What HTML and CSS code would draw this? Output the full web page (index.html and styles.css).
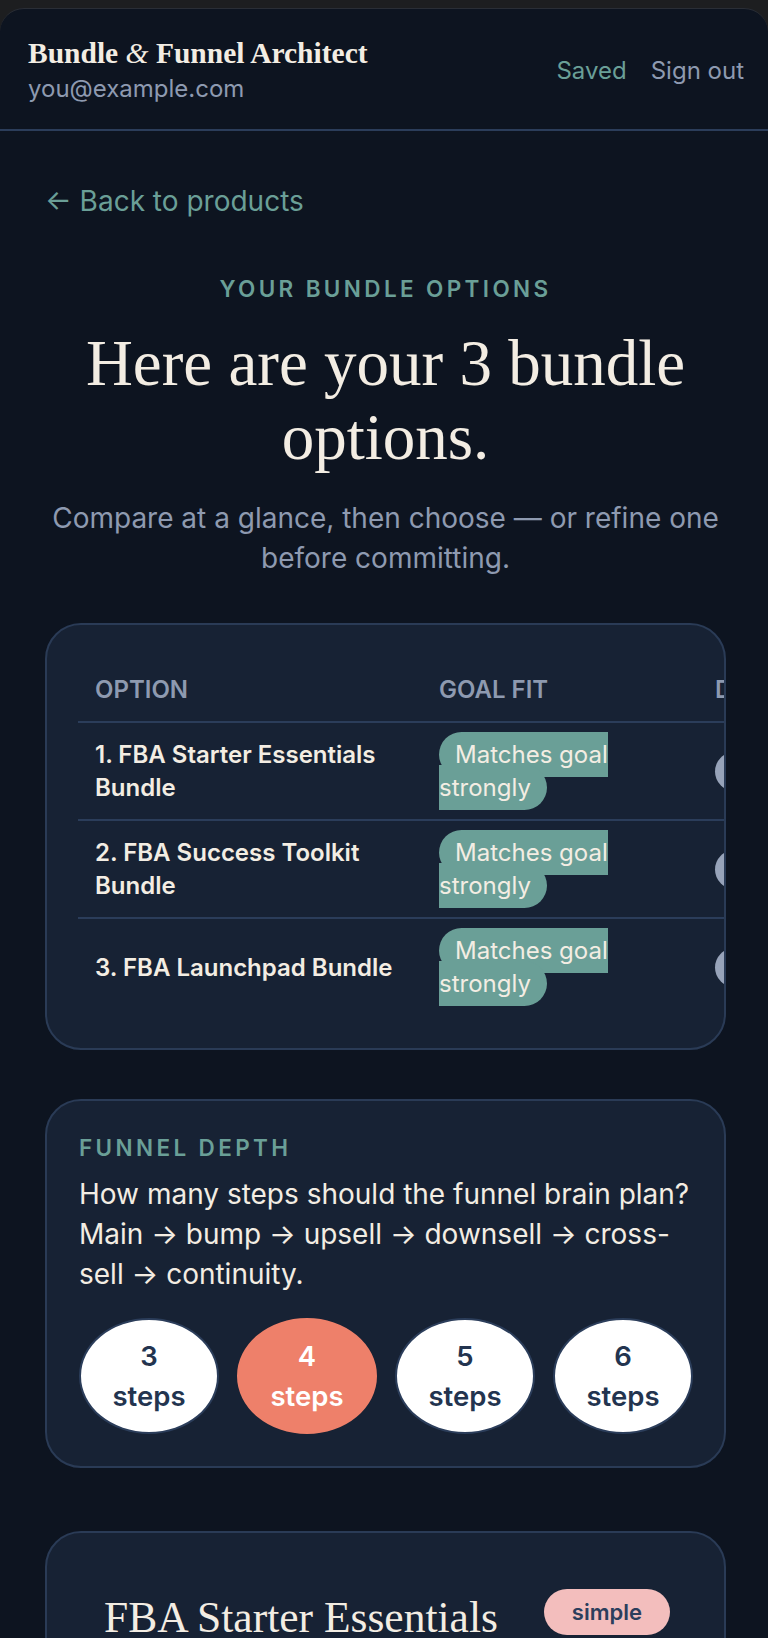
FILE: index.html
```html
<!DOCTYPE html>
<html lang="en">
<head>
    <meta charset="UTF-8">
    <meta name="viewport" content="width=device-width, initial-scale=1.0">
    <title>Bundle &amp; Funnel Architect</title>
    <link rel="stylesheet" href="styles.css">
</head>
<body>
    <div class="app">
        <!-- Top bar -->
        <header class="topbar">
            <div class="brand">
                <div class="brand-name">Bundle <span class="amp">&amp;</span> Funnel Architect</div>
                <div class="brand-email">you@example.com</div>
            </div>
            <nav class="topbar-actions">
                <span class="saved">Saved</span>
                <a href="#" class="signout">Sign out</a>
            </nav>
        </header>

        <main class="page">
            <a href="#" class="back-link">&larr; Back to products</a>

            <section class="intro">
                <p class="eyebrow">Your bundle options</p>
                <h1>Here are your 3 bundle options.</h1>
                <p class="lead">Compare at a glance, then choose — or refine one before committing.</p>
            </section>

            <!-- Comparison table -->
            <div class="card compare-card">
                <table class="compare">
                    <thead>
                        <tr>
                            <th class="col-option">Option</th>
                            <th class="col-fit">Goal fit</th>
                            <th class="col-difficulty">Difficulty</th>
                        </tr>
                    </thead>
                    <tbody>
                        <tr>
                            <td class="option-name">1. FBA Starter Essentials Bundle</td>
                            <td><span class="fit">Matches goal strongly</span></td>
                            <td><span class="level">simple</span></td>
                        </tr>
                        <tr>
                            <td class="option-name">2. FBA Success Toolkit Bundle</td>
                            <td><span class="fit">Matches goal strongly</span></td>
                            <td><span class="level">medium</span></td>
                        </tr>
                        <tr>
                            <td class="option-name">3. FBA Launchpad Bundle</td>
                            <td><span class="fit">Matches goal strongly</span></td>
                            <td><span class="level">medium</span></td>
                        </tr>
                    </tbody>
                </table>
            </div>

            <!-- Funnel depth -->
            <div class="card depth-card">
                <p class="card-label">Funnel depth</p>
                <p class="depth-text">How many steps should the funnel brain plan? Main → bump → upsell → downsell → cross-sell → continuity.</p>
                <div class="steps">
                    <button class="step">3 steps</button>
                    <button class="step step-active">4 steps</button>
                    <button class="step">5 steps</button>
                    <button class="step">6 steps</button>
                </div>
            </div>

            <!-- First bundle option -->
            <div class="card option-card">
                <div class="option-head">
                    <h2>FBA Starter Essentials Bundle</h2>
                    <span class="tag-simple">simple</span>
                </div>
            </div>
        </main>
    </div>
</body>
</html>
```

FILE: styles.css
```css
* {
    box-sizing: border-box;
}
html, body {
    height: 100%;
}
body {
    margin: 0;
    padding-top: 8px;
    background-color: #1d1e20; /* faixa escura no topo */
    font-family: Inter, "Noto Sans", sans-serif;
    color: #f3ede3;
    overflow: hidden;
}
.app {
    height: calc(100vh - 8px);
    background-color: #0d1420;
    border-top: 1px solid #2a2e36;
    border-radius: 24px 24px 0 0;
    overflow: hidden;
}
a {
    text-decoration: none;
}

/* Top bar */
.topbar {
    display: flex;
    justify-content: space-between;
    align-items: center;
    padding: 27px 24px 25px 28px;
    border-bottom: 2px solid #2b3d5a;
}
.brand-name {
    font-family: "Liberation Serif", "Times New Roman", serif;
    font-weight: bold;
    font-size: 29.5px;
    line-height: 35px;
    color: #f3ede3;
}
.amp {
    font-style: italic;
    font-weight: normal;
}
.brand-email {
    margin-top: 3px;
    font-size: 24px;
    line-height: 30px;
    color: #8e9ab0;
}
.topbar-actions {
    display: flex;
    gap: 24px;
    font-size: 24px;
}
.saved {
    color: #6a9f97;
}
.signout {
    color: #8e9ab0;
}

/* Page */
.page {
    padding: 50px 42px 0 45px;
}
.back-link {
    display: inline-block;
    font-size: 28px;
    line-height: 40px;
    color: #6a9f97;
}
.intro {
    text-align: center;
    margin-top: 53px;
}
.eyebrow {
    margin: 0;
    font-size: 22.5px;
    line-height: 30px;
    font-weight: 600;
    letter-spacing: 0.15em;
    text-transform: uppercase;
    color: #6a9f97;
}
.intro h1 {
    margin: 22px 0 0;
    font-family: "Liberation Serif", "Times New Roman", serif;
    font-weight: normal;
    font-size: 65px;
    line-height: 74px;
    color: #f3ede3;
}
.lead {
    margin: 24px 0 0;
    font-size: 28px;
    line-height: 40px;
    color: #8e9ab0;
}

/* Cards */
.card {
    background-color: #172234;
    border: 2px solid #2a3b56;
    border-radius: 36px;
}
.compare-card {
    margin-top: 45px;
    padding: 32px 0 33px 31px;
    overflow: hidden;
}
.compare {
    width: 880px;
    table-layout: fixed;
    border-collapse: collapse;
}
.compare th {
    padding: 15px 17px 14px;
    font-size: 24px;
    line-height: 35px;
    font-weight: 600;
    text-align: left;
    text-transform: uppercase;
    color: #8e9ab0;
    border-bottom: 2px solid #2b3d5a;
}
.col-option {
    width: 344px;
}
.col-fit {
    width: 276px;
}
.compare td {
    padding: 15px 17px;
    font-size: 24px;
    line-height: 33px;
    vertical-align: middle;
    border-bottom: 2px solid #2b3d5a;
}
.compare tbody tr:last-child td {
    border-bottom: none;
}
.option-name {
    font-weight: 600;
    color: #f3ede3;
}
.fit {
    padding: 8px 16px;
    border-radius: 999px;
    background-color: #6a9f97;
    color: #f3ede3;
}
.level {
    display: inline-block;
    padding: 3px 18px;
    border-radius: 999px;
    background-color: #97a3b9;
    color: #23344f;
    font-weight: 600;
}

/* Funnel depth */
.depth-card {
    margin-top: 49px;
    padding: 32px 31px 32px 32px;
}
.card-label {
    margin: 0;
    font-size: 22.5px;
    line-height: 30px;
    font-weight: 600;
    letter-spacing: 0.15em;
    text-transform: uppercase;
    color: #6a9f97;
}
.depth-text {
    margin: 11px 0 0;
    font-size: 28px;
    line-height: 40px;
    color: #f3ede3;
}
.steps {
    display: grid;
    grid-template-columns: repeat(4, 1fr);
    gap: 18px;
    margin-top: 24px;
}
.step {
    padding: 16px 30px;
    border: 2px solid #2b3d5a;
    border-radius: 50%;
    background-color: #fff;
    color: #23344f;
    font-family: inherit;
    font-size: 27.5px;
    line-height: 40px;
    font-weight: 600;
    cursor: pointer;
}
.step-active {
    background-color: #ee806a;
    border-color: #ee806a;
    color: #fff;
}

/* Option card */
.option-card {
    margin-top: 63px;
    padding: 56px 54px 40px 57px;
}
.option-head {
    display: flex;
    align-items: flex-start;
    justify-content: space-between;
    gap: 28px;
}
.option-head h2 {
    margin: 0;
    font-family: "Liberation Serif", "Times New Roman", serif;
    font-weight: normal;
    font-size: 43.5px;
    line-height: 56px;
    color: #f3ede3;
}
.tag-simple {
    flex: none;
    padding: 8px 28px;
    border-radius: 999px;
    background-color: #f3bebd;
    color: #2c3e5c;
    font-size: 22px;
    line-height: 30px;
    font-weight: 600;
}
```
